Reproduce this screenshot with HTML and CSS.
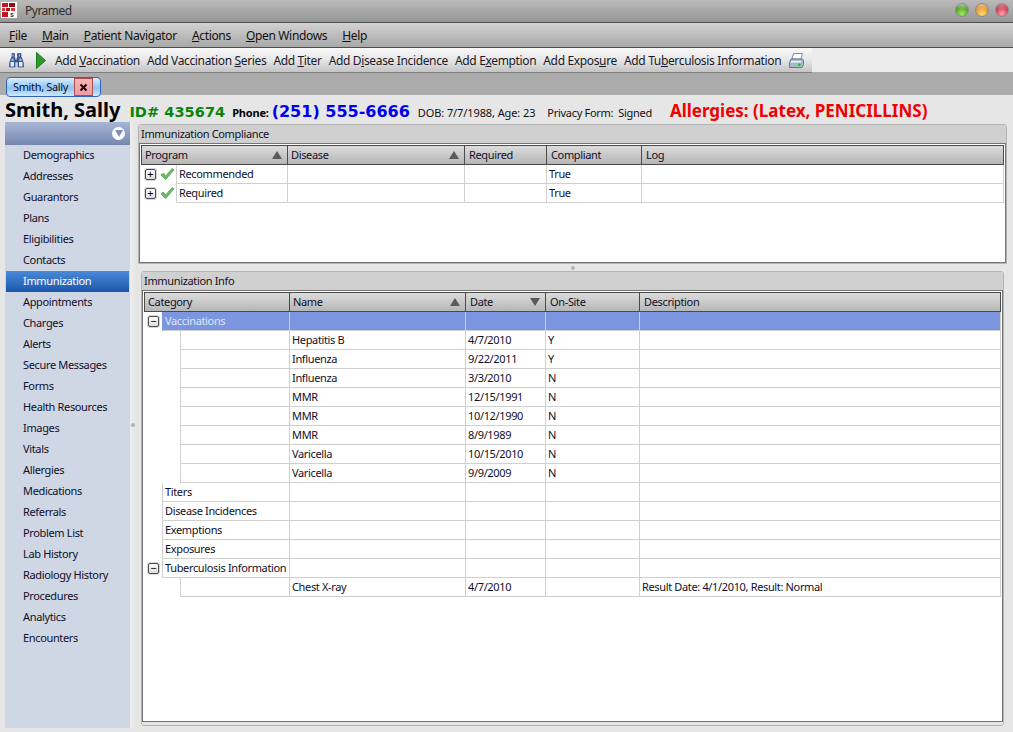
FILE: index.html
```html
<!DOCTYPE html>
<html lang="en">
<head>
  <meta charset="UTF-8" />
  <title>Pyramed</title>
  <link rel="stylesheet" href="styles.css">
</head>
<body>
  <div class="titlebar">
    <svg class="app-logo" width="16" height="16" viewBox="0 0 16 16">
      <rect width="16" height="16" fill="#fff"/>
      <rect x="1" y="1" width="6" height="4" fill="#c8141e"/><rect x="8" y="1" width="6" height="4" fill="#8e1016"/>
      <rect x="1" y="6" width="3" height="3" fill="#d8323a"/><rect x="5" y="6" width="4" height="3" fill="#a81218"/><rect x="10" y="6" width="4" height="3" fill="#d8323a"/>
      <rect x="1" y="10" width="6" height="5" fill="#c8141e"/>
      <text x="9" y="15" font-size="7" font-weight="bold" font-family="Liberation Sans" fill="#333">s</text>
    </svg>
    <span class="app-name">Pyramed</span>
    <div class="win-btns">
      <span class="orb orb-green"></span>
      <span class="orb orb-orange"></span>
      <span class="orb orb-red"></span>
    </div>
  </div>

  <div class="menubar">
    <span><u>F</u>ile</span>
    <span><u>M</u>ain</span>
    <span><u>P</u>atient Navigator</span>
    <span><u>A</u>ctions</span>
    <span><u>O</u>pen Windows</span>
    <span><u>H</u>elp</span>
  </div>

  <div class="toolbar-row">
    <div class="toolbar">
      <svg class="tool-binoc" width="15" height="15" viewBox="0 0 15 15">
        <path d="M3 .5h2.500v3h-.5l1 1.500v2h2V5l1-1.500h-.5v-3H12v3l1 2 1.500 5v3.500H9v-5H6v5H.5V10.500L2 5.500l1-2z" fill="#3f5c9a" stroke="#2a3c78" stroke-width=".6"/>
        <path d="M3.500 1.500h1v2h-1zM10 1.500h1v2h-1z" fill="#b4c8ea"/>
        <path d="M1.500 9h3.500v4.500H1.500zM10 9h3.500v4.500H10z" fill="#e2ebf9"/>
        <path d="M2.500 5.500h2v2.500h-2zM10.500 5.500h2v2.500h-2z" fill="#a0b8e4"/>
      </svg>
      <svg class="tool-play" width="10" height="17" viewBox="0 0 10 17">
        <path d="M.5.5l9 8-9 8z" fill="#2f9a2a" stroke="#1c7a1c"/>
      </svg>
      <span class="tool-btn">Add <u>V</u>accination</span>
      <span class="tool-btn">Add Vaccination <u>S</u>eries</span>
      <span class="tool-btn">Add <u>T</u>iter</span>
      <span class="tool-btn">Add D<u>i</u>sease Incidence</span>
      <span class="tool-btn">Add E<u>x</u>emption</span>
      <span class="tool-btn">Add Expos<u>u</u>re</span>
      <span class="tool-btn">Add Tu<u>b</u>erculosis Information</span>
      <svg class="tool-print" width="16" height="15" viewBox="0 0 16 15">
        <path d="M5.500 .5h9l-1.500 5.500H4z" fill="#fff" stroke="#7c8ea4"/>
        <path d="M3 6h11l1.500 1v4.500L14 14.500H1.500V9.500z" fill="#a9bacb" stroke="#66798f"/>
        <rect x="3" y="8" width="10" height="1.500" fill="#eef3f8"/>
        <rect x="10" y="10.500" width="2.500" height="2.500" fill="#12c812"/>
      </svg>
    </div>
  </div>

  <div class="tabstrip">
    <div class="tab">
      <span class="tab-label">Smith, Sally</span>
      <span class="tab-close">
        <svg width="9" height="9" viewBox="0 0 9 9"><path d="M1.500 1.500l6 6M7.500 1.500l-6 6" stroke="#1a0a0a" stroke-width="2"/></svg>
      </span>
    </div>
  </div>

  <div class="workspace">
    <div class="patient-head">
      <span class="p-name">Smith, Sally</span>
      <span class="p-id">ID# 435674</span>
      <span class="p-phone-label">Phone:</span>
      <span class="p-phone">(251) 555-6666</span>
      <span class="p-small">DOB: 7/7/1988, Age: 23</span>
      <span class="p-small p-privacy">Privacy Form:&nbsp; Signed</span>
      <span class="p-allergy">Allergies: (Latex, PENICILLINS)</span>
    </div>

    <div class="main">
      <aside class="sidebar">
        <div class="side-head">
          <span class="side-toggle"><svg width="8" height="7" viewBox="0 0 8 7"><path d="M0 0h8L4 7z" fill="#7e8fb8"/></svg></span>
        </div>
        <ul class="side-list">
          <li>Demographics</li>
          <li>Addresses</li>
          <li>Guarantors</li>
          <li>Plans</li>
          <li>Eligibilities</li>
          <li>Contacts</li>
          <li class="active">Immunization</li>
          <li>Appointments</li>
          <li>Charges</li>
          <li>Alerts</li>
          <li>Secure Messages</li>
          <li>Forms</li>
          <li>Health Resources</li>
          <li>Images</li>
          <li>Vitals</li>
          <li>Allergies</li>
          <li>Medications</li>
          <li>Referrals</li>
          <li>Problem List</li>
          <li>Lab History</li>
          <li>Radiology History</li>
          <li>Procedures</li>
          <li>Analytics</li>
          <li>Encounters</li>
        </ul>
      </aside>

      <div class="split-v"><span class="grip"></span></div>

      <div class="content">
        <section class="panel panel-top">
          <div class="panel-title">Immunization Compliance</div>
          <div class="panel-body">
            <div class="grid compliance-grid">
              <div class="row head">
                <div class="cell">Program<span class="sort"></span></div>
                <div class="cell">Disease<span class="sort"></span></div>
                <div class="cell">Required</div>
                <div class="cell">Compliant</div>
                <div class="cell">Log</div>
              </div>
              <div class="row">
                <div class="cell gutter"><span class="expander">+</span>
                  <svg class="check" width="16" height="14" viewBox="0 0 16 14"><path d="M1 8l2.500-2 2.500 3L13 1l2 1.500L6 13z" fill="#6cbc64" stroke="#4a9a48" stroke-width=".7"/></svg>
                </div>
                <div class="cell">Recommended</div>
                <div class="cell"></div>
                <div class="cell"></div>
                <div class="cell">True</div>
                <div class="cell"></div>
              </div>
              <div class="row">
                <div class="cell gutter"><span class="expander">+</span>
                  <svg class="check" width="16" height="14" viewBox="0 0 16 14"><path d="M1 8l2.500-2 2.500 3L13 1l2 1.500L6 13z" fill="#6cbc64" stroke="#4a9a48" stroke-width=".7"/></svg>
                </div>
                <div class="cell">Required</div>
                <div class="cell"></div>
                <div class="cell"></div>
                <div class="cell">True</div>
                <div class="cell"></div>
              </div>
            </div>
          </div>
        </section>

        <div class="split-h"><span class="grip"></span></div>

        <section class="panel panel-bottom">
          <div class="panel-title">Immunization Info</div>
          <div class="panel-body">
            <div class="grid info-grid" id="infoGrid">
              <div class="row head">
                <div class="cell">Category</div>
                <div class="cell">Name<span class="sort"></span></div>
                <div class="cell">Date<span class="sort down"></span></div>
                <div class="cell">On-Site</div>
                <div class="cell">Description</div>
              </div>
              <div class="row selected">
                <div class="cell gutter"><span class="expander">&minus;</span></div>
                <div class="cell">Vaccinations</div>
                <div class="cell"></div><div class="cell"></div><div class="cell"></div><div class="cell"></div>
              </div>
              <div class="row child"><div class="cell blank"></div><div class="cell"></div><div class="cell">Hepatitis B</div><div class="cell">4/7/2010</div><div class="cell">Y</div><div class="cell"></div></div>
              <div class="row child"><div class="cell blank"></div><div class="cell"></div><div class="cell">Influenza</div><div class="cell">9/22/2011</div><div class="cell">Y</div><div class="cell"></div></div>
              <div class="row child"><div class="cell blank"></div><div class="cell"></div><div class="cell">Influenza</div><div class="cell">3/3/2010</div><div class="cell">N</div><div class="cell"></div></div>
              <div class="row child"><div class="cell blank"></div><div class="cell"></div><div class="cell">MMR</div><div class="cell">12/15/1991</div><div class="cell">N</div><div class="cell"></div></div>
              <div class="row child"><div class="cell blank"></div><div class="cell"></div><div class="cell">MMR</div><div class="cell">10/12/1990</div><div class="cell">N</div><div class="cell"></div></div>
              <div class="row child"><div class="cell blank"></div><div class="cell"></div><div class="cell">MMR</div><div class="cell">8/9/1989</div><div class="cell">N</div><div class="cell"></div></div>
              <div class="row child"><div class="cell blank"></div><div class="cell"></div><div class="cell">Varicella</div><div class="cell">10/15/2010</div><div class="cell">N</div><div class="cell"></div></div>
              <div class="row child"><div class="cell blank"></div><div class="cell"></div><div class="cell">Varicella</div><div class="cell">9/9/2009</div><div class="cell">N</div><div class="cell"></div></div>
              <div class="row"><div class="cell gutter"></div><div class="cell">Titers</div><div class="cell"></div><div class="cell"></div><div class="cell"></div><div class="cell"></div></div>
              <div class="row"><div class="cell gutter"></div><div class="cell">Disease Incidences</div><div class="cell"></div><div class="cell"></div><div class="cell"></div><div class="cell"></div></div>
              <div class="row"><div class="cell gutter"></div><div class="cell">Exemptions</div><div class="cell"></div><div class="cell"></div><div class="cell"></div><div class="cell"></div></div>
              <div class="row"><div class="cell gutter"></div><div class="cell">Exposures</div><div class="cell"></div><div class="cell"></div><div class="cell"></div><div class="cell"></div></div>
              <div class="row"><div class="cell gutter"><span class="expander">&minus;</span></div><div class="cell">Tuberculosis Information</div><div class="cell"></div><div class="cell"></div><div class="cell"></div><div class="cell"></div></div>
              <div class="row child"><div class="cell blank"></div><div class="cell"></div><div class="cell">Chest X-ray</div><div class="cell">4/7/2010</div><div class="cell"></div><div class="cell">Result Date: 4/1/2010, Result: Normal</div></div>
            </div>
          </div>
        </section>
      </div>
    </div>
  </div>
</body>
</html>
```

FILE: styles.css
```css
* {
  box-sizing: border-box;
}
html, body {
  margin: 0;
  height: 100%;
  overflow: hidden;
}
body {
  font-family: 'Noto Sans', Tahoma, sans-serif;
  font-size: 11px;
  letter-spacing: -0.35px;
  color: #10102a;
  background: #e6e6e6;
  display: flex;
  flex-direction: column;
}

/* Window chrome */
.titlebar {
  height: 23px;
  display: flex;
  align-items: center;
  padding-bottom: 2px;
  background: linear-gradient(#bababa, #959595);
  border-bottom: 1px solid #4e4e4e;
}
.app-logo {
  margin-left: 1px;
  flex: none;
}
.app-name {
  margin-left: 8px;
  font-size: 12px;
  letter-spacing: -0.5px;
  color: #2e2e2e;
}
.win-btns {
  margin-left: auto;
  margin-right: 4px;
  display: flex;
  gap: 6px;
}
.orb {
  width: 14px;
  height: 14px;
  border-radius: 50%;
  border: 1px solid #8c8c8c;
}
.orb-green { background: linear-gradient(rgba(255,255,255,.55), rgba(255,255,255,0) 45%), radial-gradient(circle at 50% 80%, #a4e860, #3c8c1e 75%); }
.orb-orange { background: linear-gradient(rgba(255,255,255,.45), rgba(255,255,255,0) 45%), radial-gradient(circle at 50% 80%, #ffe070, #dc8420 75%); }
.orb-red { background: linear-gradient(rgba(255,255,255,.45), rgba(255,255,255,0) 45%), radial-gradient(circle at 50% 80%, #ffa0ae, #bc2434 75%); }

.menubar {
  height: 25px;
  display: flex;
  align-items: center;
  padding-left: 9px;
  gap: 15px;
  font-size: 12px;
  letter-spacing: -0.33px;
  color: #111;
  background: linear-gradient(#d2d2d2, #a8a8a8);
  border-bottom: 1px solid #4e4e4e;
}

.toolbar-row {
  height: 25px;
  background: linear-gradient(#ececec 24px, #ababab 24px);
}
.toolbar {
  width: 812px;
  height: 25px;
  display: flex;
  align-items: center;
  padding-left: 9px;
  background: linear-gradient(#f8f8f8, #e6e6e6 50%, #c4c4c4);
  border-bottom: 1px solid #808080;
  font-size: 12px;
  letter-spacing: -0.35px;
  white-space: nowrap;
}
.tool-binoc {
  flex: none;
}
.tool-play {
  flex: none;
  margin-left: 12px;
  margin-right: 9px;
}
.tool-btn {
  margin-right: 7px;
  color: #1a1a2a;
}
.tool-print {
  flex: none;
}

.tabstrip {
  height: 22px;
  background: #ababab;
  padding: 4px 0 0 6px;
}
.tab {
  position: relative;
  width: 95px;
  height: 20px;
  display: flex;
  align-items: stretch;
  border: 1px solid #3264c0;
  border-radius: 4px;
  background: linear-gradient(#dbeefc, #8cc6f4 55%, #cfe9fd);
}
.tab-label {
  width: 67px;
  padding-left: 6px;
  line-height: 18px;
  white-space: nowrap;
}
.tab-close {
  width: 19px;
  display: flex;
  align-items: center;
  justify-content: center;
  background: linear-gradient(#f7b4b8, #ef9aa0);
  border: 1px solid #b04a52;
}

/* Patient banner */
.workspace {
  flex: 1;
  display: flex;
  flex-direction: column;
  min-height: 0;
  background: #e6e6e6;
}
.patient-head {
  height: 27px;
  flex: none;
  display: flex;
  align-items: baseline;
  padding: 3px 0 0 5px;
  white-space: nowrap;
  letter-spacing: 0;
}
.p-name {
  font-size: 20px;
  line-height: 24px;
  font-weight: bold;
  color: #000;
}
.p-id {
  margin-left: 9px;
  font-family: 'DejaVu Sans', sans-serif;
  font-size: 14.6px;
  font-weight: bold;
  color: #0a840a;
}
.p-phone-label {
  margin-left: 7px;
  font-weight: bold;
  font-size: 11px;
  letter-spacing: -0.2px;
  color: #000;
}
.p-phone {
  margin-left: 3px;
  font-family: 'DejaVu Sans', sans-serif;
  font-size: 16px;
  font-weight: bold;
  color: #0000f0;
}
.p-small {
  margin-left: 8px;
  letter-spacing: -0.1px;
  color: #111;
}
.p-privacy {
  margin-left: 12px;
  letter-spacing: -0.3px;
}
.p-allergy {
  margin-left: 18px;
  font-size: 17px;
  font-weight: bold;
  color: #f00000;
}

.main {
  flex: 1;
  display: flex;
  min-height: 0;
  padding: 0 6px 4px 5px;
}

/* Left navigator */
.sidebar {
  width: 125px;
  flex: none;
  background: #cfd6e4;
}
.side-head {
  height: 23px;
  display: flex;
  justify-content: flex-end;
  align-items: center;
  padding-right: 5px;
  background: linear-gradient(#a8b6d6, #7687b0);
}
.side-toggle {
  width: 13px;
  height: 13px;
  border-radius: 50%;
  background: #fff;
  display: flex;
  align-items: center;
  justify-content: center;
}
.side-list {
  list-style: none;
  margin: 0;
  padding: 0;
}
.side-list li {
  height: 21px;
  line-height: 20px;
  padding-left: 18px;
  color: #10102a;
}
.side-list li.active {
  margin: 0 1px;
  padding-left: 17px;
  color: #fff;
  background: linear-gradient(#4a8ad8, #1a57ac);
}

.split-v {
  width: 8px;
  flex: none;
  display: flex;
  align-items: center;
  padding-left: 1px;
  background: linear-gradient(90deg, #eeeeee, #e2e2e2);
}
.grip {
  width: 4px;
  height: 4px;
  border-radius: 50%;
  background: #b4b4b4;
}

/* Panels */
.content {
  flex: 1;
  min-width: 0;
  display: flex;
  flex-direction: column;
  padding-top: 2px;
}
.panel {
  display: flex;
  flex-direction: column;
  min-height: 0;
  border: 1px solid #b4b4b4;
  border-radius: 3px 3px 0 0;
}
.panel-top {
  height: 140px;
  flex: none;
}
.panel-bottom {
  flex: 1;
  margin: 0 3px 2px 3px;
  padding-bottom: 3px;
  border-radius: 3px;
}
.split-h {
  height: 7px;
  flex: none;
  display: flex;
  justify-content: center;
  align-items: center;
}
.panel-title {
  height: 18px;
  line-height: 18px;
  padding-left: 2px;
  background: #d0d0d0;
  flex: none;
}
.panel-body {
  flex: 1;
  background: #fff;
  border: 1px solid #747474;
  padding: 1px;
  min-height: 0;
}

/* Data grids */
.row {
  display: grid;
  height: 19px;
  line-height: 18px;
}
.compliance-grid .row {
  grid-template-columns: 146px 177px 82px 95px 1fr;
}
.compliance-grid .row:not(.head) {
  grid-template-columns: 35px 112px 177px 82px 95px 1fr;
}
.info-grid .row {
  grid-template-columns: 145px 176px 80px 94px 1fr;
}
.info-grid .row:not(.head) {
  grid-template-columns: 18px 128px 176px 80px 94px 1fr;
}
.info-grid .row.child {
  grid-template-columns: 36px 110px 176px 80px 94px 1fr;
}
.cell {
  position: relative;
  padding-left: 2px;
  border-right: 1px solid #d0d0d0;
  border-bottom: 1px solid #d0d0d0;
  white-space: nowrap;
  overflow: hidden;
}
.cell.gutter, .cell.blank {
  border-color: transparent;
}
.gutter + .cell, .blank + .cell {
  border-left: 1px solid #d0d0d0;
  padding-left: 2px;
}
.row .cell.gutter {
  display: flex;
  align-items: center;
  padding-left: 4px;
  gap: 4px;
}
.head {
  height: 20px;
  line-height: 18px;
  background: linear-gradient(#dcdcdc, #b6b6b6);
  border: 1px solid #4a4a4a;
}
.head .cell {
  border-bottom: none;
  border-right: 1px solid #4a4a4a;
  padding-left: 3px;
}
.head .cell:nth-child(n+3) {
  padding-left: 4px;
}
.head .cell:last-child {
  border-right: none;
}
.sort {
  position: absolute;
  right: 5px;
  top: 5px;
  border-left: 5px solid transparent;
  border-right: 5px solid transparent;
  border-bottom: 8px solid #5a5a5a;
}
.sort.down {
  border-bottom: none;
  border-top: 8px solid #5a5a5a;
}
.selected .cell:not(.gutter) {
  background: #7b96de;
  color: #dfe6f8;
  border-left-color: #7b96de;
}
.expander {
  width: 11px;
  height: 11px;
  flex: none;
  border: 1px solid #4a4a4a;
  border-radius: 2px;
  background: linear-gradient(#fff, #dcdcdc);
  box-shadow: 0 0 0 1px #d8d8d8;
  font-size: 11px;
  letter-spacing: 0;
  line-height: 8px;
  text-align: center;
  color: #000;
}
```
